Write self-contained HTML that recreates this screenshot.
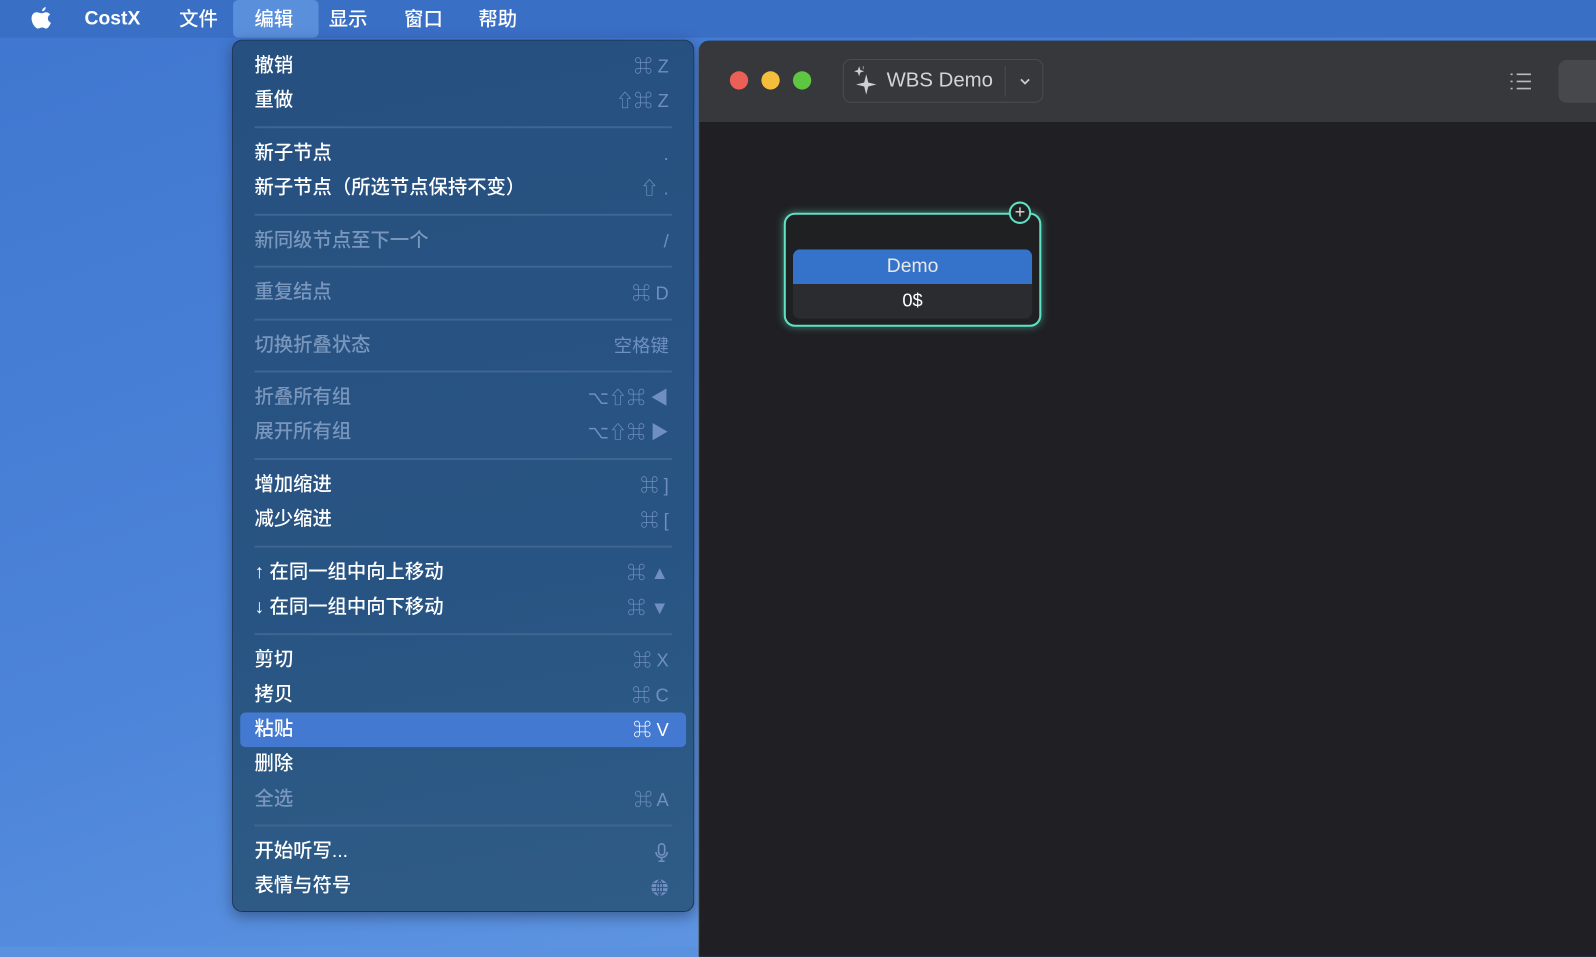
<!DOCTYPE html>
<html><head><meta charset="utf-8"><style>
*{margin:0;padding:0;box-sizing:border-box}
html,body{width:1596px;height:926px;overflow:hidden;background:#5a92e0}
#w{position:absolute;left:0;top:0;width:1568px;height:930px;transform:scale(1.0179);transform-origin:0 0;
background:linear-gradient(160deg,#3f76cf 0%,#4d85da 50%,#6a9fe6 100%);font-family:"Liberation Sans","Noto Sans CJK SC",sans-serif}
.bar{position:absolute;left:0;top:0;width:1568px;height:37px;background:#3a6fc6;color:#fff;font-size:19px;font-weight:500}
.bar span{position:absolute;top:2px;line-height:36px}
.hl{position:absolute;left:229px;top:0;width:84px;height:37px;background:#5a8fdc;border-radius:5px}
.menu{position:absolute;left:228px;top:39px;width:454px;height:857px;border-radius:10px;border:1px solid #1d3556;
background:linear-gradient(170deg,#26507f 0%,#285483 60%,#2f5c86 100%);box-shadow:0 4px 14px rgba(0,0,0,.35)}
.it{position:absolute;left:21px;width:410px;height:30px;font-size:19px;color:#fff;line-height:30px;font-weight:500}
.it.d{color:#7996bd}
.it b{position:absolute;right:3px;top:0;font-weight:normal;color:#6f8fc0;font-size:18px}
.sep{position:absolute;left:21px;width:410px;height:2px;background:#3f6591}
.sel{position:absolute;left:7px;top:660px;width:438px;height:34px;background:#4379d0;border-radius:5px}
.win{position:absolute;left:686px;top:40px;width:890px;height:900px;background:#202024;border-radius:10px 0 0 0;border-left:1px solid #555}
.tb{position:absolute;left:0;top:0;width:100%;height:81px;background:#36383c;border-radius:10px 0 0 0;border-bottom:1px solid #18181a}
.tl{position:absolute;top:30px;width:18px;height:18px;border-radius:50%}
</style></head><body><div id="w">
<div class="bar">
<div class="hl"></div>
<svg style="position:absolute;left:30px;top:6px" width="22" height="25" viewBox="0 0 22 25"><path fill="#fff" d="M15 1c0 2-1.6 4-3.6 4C11.2 3 13 1.2 15 1zM11 7c1.5 0 2.6-1 4.3-1 1.4 0 3 .8 4 2.2-3.4 1.9-2.8 6.8.7 8.1-.7 2-2.6 5.7-4.6 5.7-1.6 0-2-1-4-1s-2.6 1-4.2 1C5 22 1 17 1 12c0-4 2.6-6 5-6 1.7 0 3.3 1 5 1z"/></svg>
<span style="left:83px;font-weight:bold;top:1px">CostX</span>
<span style="left:176px">文件</span><span style="left:250px">编辑</span><span style="left:323px">显示</span><span style="left:397px">窗口</span><span style="left:470px">帮助</span>
</div>
<div class="menu">
<div class="sel"></div>
<div class="it" style="top:10px">撤销<b>⌘ Z</b></div>
<div class="it" style="top:44px">重做<b>⇧⌘ Z</b></div>
<div class="sep" style="top:84px"></div>
<div class="it" style="top:96px">新子节点<b>.</b></div>
<div class="it" style="top:130px">新子节点（所选节点保持不变）<b>⇧ .</b></div>
<div class="sep" style="top:170px"></div>
<div class="it d" style="top:182px">新同级节点至下一个<b>/</b></div>
<div class="sep" style="top:221px"></div>
<div class="it d" style="top:233px">重复结点<b>⌘ D</b></div>
<div class="sep" style="top:273px"></div>
<div class="it d" style="top:285px">切换折叠状态<b>空格键</b></div>
<div class="sep" style="top:324px"></div>
<div class="it d" style="top:336px">折叠所有组<b>⌥⇧⌘ ◀</b></div>
<div class="it d" style="top:370px">展开所有组<b>⌥⇧⌘ ▶</b></div>
<div class="sep" style="top:410px"></div>
<div class="it" style="top:422px">增加缩进<b>⌘ ]</b></div>
<div class="it" style="top:456px">减少缩进<b>⌘ [</b></div>
<div class="sep" style="top:496px"></div>
<div class="it" style="top:508px">↑ 在同一组中向上移动<b>⌘ ▲</b></div>
<div class="it" style="top:542px">↓ 在同一组中向下移动<b>⌘ ▼</b></div>
<div class="sep" style="top:582px"></div>
<div class="it" style="top:594px">剪切<b>⌘ X</b></div>
<div class="it" style="top:628px">拷贝<b>⌘ C</b></div>
<div class="it" style="top:662px">粘贴<b style="color:#fff">⌘ V</b></div>
<div class="it" style="top:696px">删除</div>
<div class="it d" style="top:731px">全选<b>⌘ A</b></div>
<div class="sep" style="top:770px"></div>
<div class="it" style="top:782px">开始听写...<b><svg width="14" height="20" viewBox="0 0 14 20" style="vertical-align:middle"><rect x="4" y="1" width="6" height="11" rx="3" fill="none" stroke="#6f8fc0" stroke-width="1.6"/><path d="M1.5 9a5.5 5.5 0 0 0 11 0M7 14.5V18M4 18h6" fill="none" stroke="#6f8fc0" stroke-width="1.6"/></svg></b></div>
<div class="it" style="top:816px">表情与符号<b><svg width="18" height="18" viewBox="0 0 18 18" style="vertical-align:middle"><circle cx="9" cy="9" r="8" fill="#6f8fc0"/><path d="M1 9h16M9 1v16M2.5 5h13M2.5 13h13M9 1c-4 4-4 12 0 16M9 1c4 4 4 12 0 16" stroke="#2b5683" stroke-width="1" fill="none"/></svg></b></div>
</div>
<div class="win">
<div class="tb">
<div class="tl" style="left:30px;background:#ec5f57"></div>
<div class="tl" style="left:61px;background:#f4bd3c"></div>
<div class="tl" style="left:92px;background:#5ec640"></div>
<div style="position:absolute;left:141px;top:18px;width:197px;height:43px;border:1px solid #4a4c50;border-radius:8px">
<svg style="position:absolute;left:8px;top:5px" width="28" height="32" viewBox="0 0 28 32"><path d="M14 9l2 8 8 2-8 2-2 8-2-8-8-2 8-2z" fill="#cfcfcf"/><path d="M7 2l1 3 3 1-3 1-1 3-1-3-3-1 3-1zM11 1v3" fill="#cfcfcf" stroke="#cfcfcf" stroke-width=".6"/></svg>
<span style="position:absolute;left:42px;top:9px;font-size:20px;color:#d4d4d4">WBS Demo</span>
<div style="position:absolute;left:158px;top:6px;width:1px;height:30px;background:#4a4c50"></div>
<svg style="position:absolute;left:172px;top:16px" width="12" height="10" viewBox="0 0 12 10"><path d="M2 3l4 4 4-4" stroke="#ccc" stroke-width="1.8" fill="none"/></svg>
</div>
<svg style="position:absolute;left:796px;top:30px" width="22" height="20" viewBox="0 0 22 20"><g stroke="#bbb" stroke-width="1.6"><path d="M7 3h14M7 10h14M7 17h14M1 3h2M1 10h2M1 17h2"/></g></svg>
<div style="position:absolute;left:844px;top:19px;width:60px;height:42px;background:#46484c;border-radius:8px"></div>
</div>
<div style="position:absolute;left:83px;top:169px;width:253px;height:112px;border:2px solid #5fe2c4;border-radius:11px;background:#1f2022;box-shadow:0 0 8px rgba(95,226,196,.5)">
<div style="position:absolute;left:7px;top:34px;width:235px;height:68px;border-radius:7px;background:#2b2c2f;overflow:hidden">
<div style="height:34px;background:#3572c9;color:#e8e8e8;font-size:19px;text-align:center;line-height:34px">Demo</div>
<div style="color:#fff;font-size:18px;text-align:center;line-height:33px;font-weight:500">0$</div></div>
</div>
<div style="position:absolute;left:304px;top:158px;width:22px;height:22px;border-radius:50%;border:2px solid #5fe2c4;background:#1f2022;color:#ddd;font-size:18px;line-height:17px;text-align:center">+</div>
</div>
</div></body></html>
